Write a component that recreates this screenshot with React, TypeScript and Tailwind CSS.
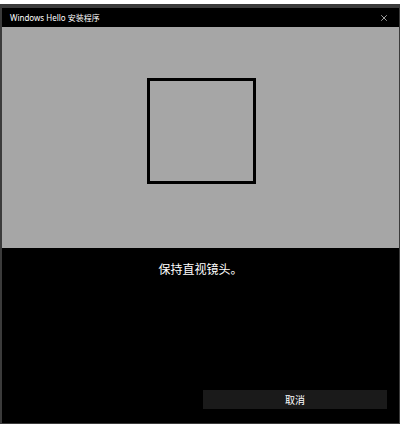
import { X } from "lucide-react";

export default function App() {
  return (
    <div className="w-[403px] h-[426px] bg-white pt-[4px] pr-[3px] pb-[2px] overflow-hidden">
      <div
        className="h-full flex flex-col bg-black border-t-[4px] border-l-[2px] border-r-[1px] border-b-[1px] border-[#3b3b3b]"
        style={{ fontFamily: '"Noto Sans", "Noto Sans CJK SC", sans-serif' }}
      >
        <div className="h-[19px] flex items-center justify-between pl-[8px] pr-[10px] bg-black">
          <span className="text-[8px] text-white leading-none">Windows Hello 安装程序</span>
          <X className="w-[10px] h-[10px] text-white" strokeWidth={1.5} />
        </div>
        <div className="h-[221px] bg-[#a6a6a6] flex justify-center pt-[51px] pl-[2px]">
          <div className="w-[109px] h-[106px] border-[3px] border-black" />
        </div>
        <div className="flex-1 flex flex-col">
          <div className="pt-[13px] text-center text-[12px] text-white leading-[18px]">
            保持直视镜头。
          </div>
          <div className="flex-1" />
          <div className="flex justify-end pr-[12px] pb-[14px]">
            <button className="w-[184px] h-[19px] bg-[#1a1a1a] text-white text-[10px] leading-none">
              取消
            </button>
          </div>
        </div>
      </div>
    </div>
  );
}
